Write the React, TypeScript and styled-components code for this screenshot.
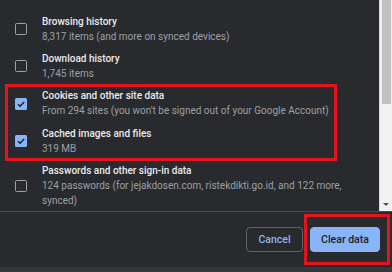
import styled, { createGlobalStyle } from "styled-components";

const GlobalStyle = createGlobalStyle`
  html, body {
    margin: 0;
    padding: 0;
    background: #292a2d;
  }
  body {
    font-family: Roboto, "Liberation Sans", sans-serif;
    -webkit-font-smoothing: antialiased;
  }
`;

type Item = {
  title: string;
  detail: string;
  checked: boolean;
};

const ITEMS: Item[] = [
  { title: "Browsing history", detail: "8,317 items (and more on synced devices)", checked: false },
  { title: "Download history", detail: "1,745 items", checked: false },
  { title: "Cookies and other site data", detail: "From 294 sites (you won't be signed out of your Google Account)", checked: true },
  { title: "Cached images and files", detail: "319 MB", checked: true },
  {
    title: "Passwords and other sign-in data",
    detail: "124 passwords (for jejakdosen.com, ristekdikti.go.id, and 122 more, synced)",
    checked: false,
  },
];

const CheckIcon = () => (
  <svg width="10" height="10" viewBox="0 0 10 10">
    <path d="M2 5.2 L4.1 7.2 L8.2 2.9" fill="none" stroke="#202124" strokeWidth="1.5" />
  </svg>
);

const Row = ({ item }: { item: Item }) => (
  <RowWrap>
    <Box checked={item.checked}>{item.checked && <CheckIcon />}</Box>
    <Texts>
      <Title>{item.title}</Title>
      <Detail>{item.detail}</Detail>
    </Texts>
  </RowWrap>
);

export default function App() {
  return (
    <>
      <GlobalStyle />
      <Dialog>
        <Scroller>
          <List>
            {ITEMS.slice(0, 2).map((it) => <Row key={it.title} item={it} />)}
            <Marked>
              {ITEMS.slice(2, 4).map((it) => <Row key={it.title} item={it} />)}
            </Marked>
            {ITEMS.slice(4).map((it) => <Row key={it.title} item={it} />)}
          </List>
          <Scrollbar>
            <Thumb />
            <ArrowDown />
          </Scrollbar>
        </Scroller>
        <Footer>
          <Button>Cancel</Button>
          <MarkedButton>
            <Button primary>Clear data</Button>
          </MarkedButton>
        </Footer>
        <BottomBand />
      </Dialog>
    </>
  );
}

const Dialog = styled.div`
  width: 392px;
  height: 272px;
  display: flex;
  flex-direction: column;
  overflow: hidden;
`;

const Scroller = styled.div`
  height: 211px;
  display: flex;
  border-bottom: 1px solid #4a4c50;
`;

const List = styled.div`
  flex: 1;
  padding: 10.6px 32px 0 15px;
  overflow: hidden;
`;

const Marked = styled.div`
  position: relative;
  &::after {
    content: "";
    position: absolute;
    top: -1px;
    bottom: -1.5px;
    left: -10px;
    width: 332px;
    border: 3.5px solid #e3141c;
    box-sizing: border-box;
    pointer-events: none;
  }
`;

const RowWrap = styled.div`
  display: flex;
  align-items: center;
  gap: 15px;
  padding: 3.35px 0;
`;

const Box = styled.div<{ checked: boolean }>`
  width: 12px;
  height: 12px;
  flex: none;
  box-sizing: border-box;
  border-radius: 1.5px;
  display: flex;
  align-items: center;
  justify-content: center;
  border: ${(p) => (p.checked ? "none" : "1.8px solid #9aa0a6")};
  background: ${(p) => (p.checked ? "#8ab4f8" : "transparent")};
`;

const Texts = styled.div`
  display: flex;
  flex-direction: column;
  min-width: 0;
`;

const Title = styled.div`
  font-size: 10px;
  line-height: 15px;
  font-weight: 500;
  color: #e8eaed;
`;

const Detail = styled.div`
  font-size: 10px;
  line-height: 15.5px;
  color: #9aa0a6;
`;

const Scrollbar = styled.div`
  width: 13px;
  flex: none;
  background: #f1f1f1;
  border-left: 1px solid #d9d9d9;
  box-sizing: border-box;
  display: flex;
  flex-direction: column;
  align-items: center;
`;

const Thumb = styled.div`
  width: 9px;
  height: 104px;
  background: #c1c1c1;
`;

const ArrowDown = styled.div`
  margin-top: auto;
  margin-bottom: 5px;
  width: 0;
  height: 0;
  border-left: 3px solid transparent;
  border-right: 3px solid transparent;
  border-top: 3px solid #505050;
`;

const Footer = styled.div`
  flex: 1;
  display: flex;
  justify-content: flex-end;
  align-items: center;
  gap: 7px;
  padding: 0 12px 1px 0;
`;

const MarkedButton = styled.div`
  position: relative;
  display: flex;
  &::after {
    content: "";
    position: absolute;
    top: -13px;
    bottom: -13px;
    left: -6px;
    right: -10px;
    border: 3.5px solid #e3141c;
    pointer-events: none;
  }
`;

const Button = styled.button<{ primary?: boolean }>`
  height: 25px;
  box-sizing: border-box;
  border-radius: 4px;
  font-family: Roboto, "Liberation Sans", sans-serif;
  font-size: 10.5px;
  font-weight: 500;
  padding: 0;
  width: ${(p) => (p.primary ? "70px" : "57px")};
  border: 1px solid ${(p) => (p.primary ? "#8ab4f8" : "#5f6368")};
  background: ${(p) => (p.primary ? "#8ab4f8" : "transparent")};
  color: ${(p) => (p.primary ? "#202124" : "#8ab4f8")};
`;

const BottomBand = styled.div`
  height: 5px;
  flex: none;
  background: #35363a;
`;
